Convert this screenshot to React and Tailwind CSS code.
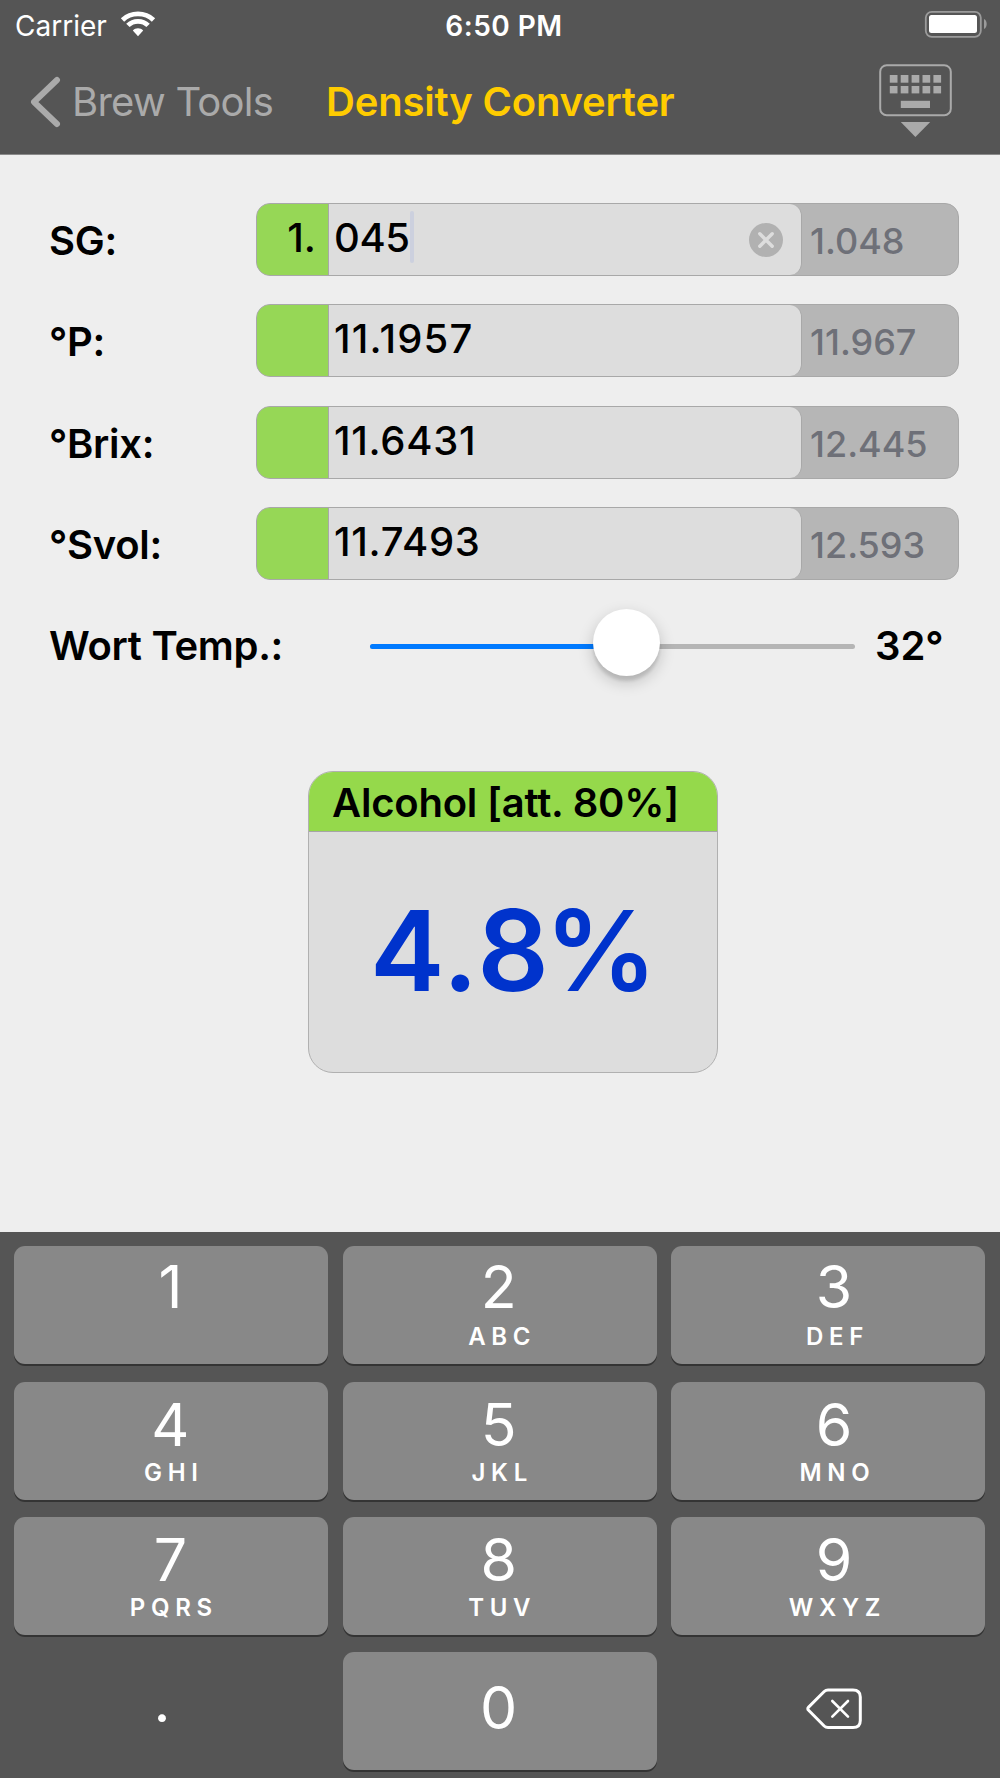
const rows = [
  { label: "SG:", prefix: "1.", value: "045", hint: "1.048", spacing: "tracking-[-0.4px]", active: true },
  { label: "°P:", prefix: "", value: "11.1957", hint: "11.967", spacing: "tracking-[1.2px]" },
  { label: "°Brix:", prefix: "", value: "11.6431", hint: "12.445", spacing: "tracking-[0.7px]" },
  { label: "°Svol:", prefix: "", value: "11.7493", hint: "12.593", spacing: "tracking-[0.7px]" },
];

const keys = [
  ["1", ""],
  ["2", "ABC"],
  ["3", "DEF"],
  ["4", "GHI"],
  ["5", "JKL"],
  ["6", "MNO"],
  ["7", "PQRS"],
  ["8", "TUV"],
  ["9", "WXYZ"],
];

function WifiIcon() {
  return (
    <svg width="36" height="26" viewBox="0 0 36 26" className="ml-[13px] mt-[11px]" fill="#fff">
      <path d="M18 25.2 L12.8 19.5 C15.5 16.6 20.5 16.6 23.2 19.5 Z" />
      <path d="M7.9 14.4 C13.4 8.9 22.6 8.9 28.1 14.4" fill="none" stroke="#fff" strokeWidth="4.8" />
      <path d="M2.5 8.9 C11 0.9 25 0.9 33.5 8.9" fill="none" stroke="#fff" strokeWidth="4.8" />
    </svg>
  );
}

function BatteryIcon() {
  return (
    <svg width="64" height="30" viewBox="0 0 64 30" className="mt-[9px]">
      <rect x="1.8" y="2.8" width="55" height="25" rx="6" fill="none" stroke="#9b9b9b" strokeWidth="1.8" />
      <rect x="5" y="6" width="48" height="18" rx="2.5" fill="#fff" />
      <path d="M60 10 C63.6 11.5 63.6 18.5 60 20 Z" fill="#9b9b9b" />
    </svg>
  );
}

function HideKeyboardIcon() {
  const cols = [0, 1, 2, 3, 4];
  return (
    <svg width="74" height="74" viewBox="0 0 74 74" className="shrink-0" fill="#aaa">
      <rect x="1.2" y="1.2" width="70.6" height="50" rx="6.5" fill="none" stroke="#aaa" strokeWidth="2" />
      {cols.map((c) => (
        <g key={c}>
          <rect x={10.8 + c * 10.9} y="11" width="7.7" height="7.7" />
          <rect x={10.8 + c * 10.9} y="22" width="7.7" height="7.4" />
        </g>
      ))}
      <rect x="21.8" y="36.8" width="29.2" height="7.2" />
      <path d="M21.8 58 H51.2 L36.4 73 Z" />
    </svg>
  );
}

function DeleteIcon() {
  return (
    <svg width="56" height="42" viewBox="0 0 56 42" fill="none" stroke="#fff" strokeWidth="3" strokeLinecap="round" strokeLinejoin="round">
      <path d="M22 2 H47 Q54.3 2 54.3 9 V32.5 Q54.3 39.5 47 39.5 H22 Q19.8 39.5 18.2 38 L2.6 22.3 Q1 20.7 2.6 19.1 L18.2 3.5 Q19.8 2 22 2 Z" />
      <path d="M26.3 13 L42 28.7 M42 13 L26.3 28.7" strokeWidth="2.6" />
    </svg>
  );
}

function Header() {
  return (
    <header className="h-[155px] bg-[#555] border-b border-[#8a8a8a]">
      <div className="flex h-[51px] text-white">
        <div className="flex w-[400px] pl-[15px]">
          <span className="pt-[9px] text-[28px] leading-[34px]">Carrier</span>
          <WifiIcon />
        </div>
        <span className="w-[208px] pt-[9px] text-center text-[28px] leading-[34px] font-semibold tracking-[0.5px]">6:50 PM</span>
        <div className="ml-auto pr-[12px]">
          <BatteryIcon />
        </div>
      </div>
      <div className="flex pl-[29px]">
        <svg width="32" height="52" viewBox="0 0 32 52" className="mt-[25px] shrink-0" fill="none" stroke="#aaa" strokeWidth="6" strokeLinecap="round" strokeLinejoin="round">
          <path d="M28 4 L5 26 L28 48" />
        </svg>
        <span className="ml-[11px] w-[252px] pt-[27px] text-[40px] leading-[48px] tracking-[-0.75px] whitespace-nowrap text-[#aaa]">Brew Tools</span>
        <h1 className="w-[555px] pl-[2px] pt-[27px] text-[40px] leading-[48px] font-semibold tracking-[-0.2px] whitespace-nowrap text-[#ffcc00]">Density Converter</h1>
        <div className="pt-[13px]">
          <HideKeyboardIcon />
        </div>
      </div>
    </header>
  );
}

function DensityRow({ label, prefix, value, hint, spacing, active }) {
  return (
    <div className="flex h-[73px]">
      <label className="-ml-px w-[207px] pt-[14px] text-[40px] leading-[48px] font-semibold tracking-[-0.3px] whitespace-nowrap">{label}</label>
      <div className="flex w-[703px] rounded-[14px] border border-[#a8a8a8] bg-[#b6b6b6]">
        <div className="w-[72px] rounded-l-[13px] border-r border-[#a8a8a8] bg-[#96d756] pr-[12px] pt-[10px] text-right text-[40px] leading-[48px] font-medium">
          {prefix}
        </div>
        <div className="flex w-[473px] rounded-r-[12px] border-r border-[#a8a8a8] bg-[#ddd] pl-[5px]">
          <span className={`pt-[10px] text-[40px] leading-[48px] font-medium ${spacing}`}>{value}</span>
          {active && <span className="mt-[7px] h-[52px] w-[4px] rounded-full bg-[#ccd0de]" />}
          {active && (
            <svg width="34" height="34" viewBox="0 0 34 34" className="ml-auto mr-[18px] mt-[19px]">
              <circle cx="17" cy="17" r="17" fill="#b1b1b1" />
              <path d="M10.8 10.8 L23.2 23.2 M23.2 10.8 L10.8 23.2" stroke="#ddd" strokeWidth="3.4" strokeLinecap="round" />
            </svg>
          )}
        </div>
        <span className="pl-[8px] pt-[14px] text-[36px] leading-[46px] font-medium text-[#6e7078]">{hint}</span>
      </div>
    </div>
  );
}

function TempSlider() {
  return (
    <div className="flex h-[72px] pr-[50px]">
      <span className="-ml-px w-[321px] pt-[13px] text-[40px] leading-[48px] font-semibold tracking-[-0.3px] whitespace-nowrap">Wort Temp.:</span>
      <div className="relative h-[5px] w-[485px] mt-[35px] rounded-full bg-[#b5b5b5]">
        <div className="h-full w-[240px] rounded-full bg-[#007aff]" />
        <div className="absolute -top-[35px] left-[222.5px] size-[67px] rounded-full bg-white shadow-[0_6px_16px_rgba(0,0,0,0.2),0_5px_3px_rgba(0,0,0,0.1)]" />
      </div>
      <span className="ml-[20px] pt-[13px] text-[40px] leading-[48px] font-semibold">32°</span>
    </div>
  );
}

function Key({ digit, letters, first, last }) {
  return (
    <div className={`flex h-[118px] flex-col items-center rounded-[11px] bg-[#888] shadow-[0_2px_0_#343434] ${last ? "pl-[12px]" : "pr-[2px]"}`}>
      <span className={`text-[59px] leading-[60px] ${first ? "pt-[11px] pb-[2px]" : "pt-[13px]"}`}>{digit}</span>
      <span className="-mr-[7px] text-[24px] leading-[35px] font-semibold tracking-[5.7px]">{letters}</span>
    </div>
  );
}

function Keyboard() {
  return (
    <div className="grid h-[546px] grid-cols-[314px_314px_314px] content-start gap-x-[14.3px] gap-y-[17.4px] bg-[#555] px-[14.4px] pt-[14.3px] text-white">
      {keys.map(([digit, letters], i) => (
        <Key key={digit} digit={digit} letters={letters} first={i < 3} last={i % 3 === 2} />
      ))}
      <div className="flex h-[118px] justify-center pr-[19px] pt-[19px] text-[59px] leading-[60px]">.</div>
      <div className="flex h-[118px] justify-center rounded-[11px] bg-[#888] pr-[2px] pt-[26px] text-[59px] leading-[60px] shadow-[0_2px_0_#343434]">0</div>
      <div className="flex h-[118px] justify-center pl-[13px] pt-[36px]">
        <DeleteIcon />
      </div>
    </div>
  );
}

export default function App() {
  return (
    <div className="flex h-[1778px] w-[1000px] flex-col overflow-hidden bg-[#eee] font-['Inter',sans-serif] text-black">
      <Header />
      <main className="h-[1077px] pl-[50px] pt-[48px]">
        <div className="flex flex-col gap-[28.4px]">
          {rows.map((row) => (
            <DensityRow key={row.label} {...row} />
          ))}
        </div>
        <div className="mt-[28.4px]">
          <TempSlider />
        </div>
        <section className="ml-[258px] mt-[90px] h-[302px] w-[410px] overflow-hidden rounded-[25px] border border-[#b0b0b0] bg-[#ddd]">
          <h2 className="h-[60px] border-b border-[#a5a5a5] bg-[#95d94b] pl-[23px] pt-[7px] text-[40px] leading-[48px] font-semibold tracking-[-0.2px] whitespace-nowrap">Alcohol [att. 80%]</h2>
          <p className="pl-[61px] pt-[51px] text-[112px] leading-[134px] font-semibold tracking-[1.8px] whitespace-nowrap text-[#0033cc]">
            4.8<span className="-ml-[6px]">%</span>
          </p>
        </section>
      </main>
      <Keyboard />
    </div>
  );
}
